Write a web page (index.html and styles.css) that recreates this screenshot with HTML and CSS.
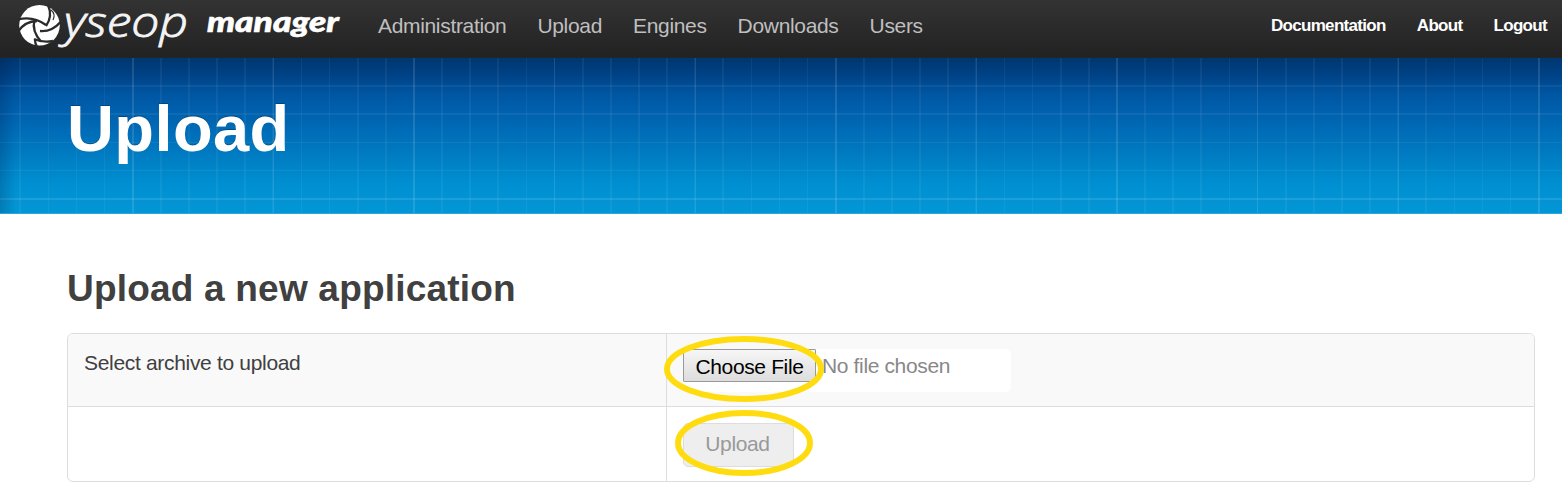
FILE: index.html
```html
<!DOCTYPE html>
<html lang="en">
<head>
<meta charset="utf-8">
<title>Yseop Manager</title>
<link rel="stylesheet" href="styles.css">
</head>
<body>
<header class="topbar">
  <svg class="brand" width="345" height="57" viewBox="0 0 345 57" role="img" aria-label="yseop manager">
    <circle cx="39.5" cy="25.3" r="20.3" fill="#fff"/>
    <g class="brand-blades">
      <path d="M18 19.5 Q33 15.5 46 25"/>
      <path d="M48 5 Q53 16 46 26"/>
      <path d="M60.5 22 Q52 32 40 31"/>
      <path d="M34.500 20 Q31.500 31 41 41.500"/>
      <path d="M18.500 31 Q25 21.500 37 21"/>
      <path d="M34 39 Q43 43 53 41"/>
      <path d="M35 40 Q35 43 37 47"/>
      <path d="M51 10 Q56 14 53 20" class="brand-blade-thin"/>
    </g>
    <text class="brand-name" x="64" y="36.500" textLength="124" lengthAdjust="spacingAndGlyphs">yseop</text>
    <text class="brand-product" x="207" y="32" textLength="132" lengthAdjust="spacingAndGlyphs">manager</text>
  </svg>
  <nav class="main-nav">
    <a>Administration</a><a>Upload</a><a>Engines</a><a>Downloads</a><a>Users</a>
  </nav>
  <nav class="side-nav">
    <a>Documentation</a><a>About</a><a>Logout</a>
  </nav>
</header>
<section class="banner"><h1>Upload</h1></section>
<main class="content">
  <h2>Upload a new application</h2>
  <div class="form-table">
    <div class="row striped">
      <div class="cell label">Select archive to upload</div>
      <div class="cell">
        <div class="file-input"><button class="choose" type="button">Choose File</button><span>No file chosen</span></div>
        <svg class="ring" width="160" height="66"><ellipse cx="80" cy="33" rx="77" ry="30"/></svg>
      </div>
    </div>
    <div class="row">
      <div class="cell label"></div>
      <div class="cell">
        <button class="submit" type="button">Upload</button>
        <svg class="ring ring-small" width="138" height="66"><ellipse cx="69" cy="33" rx="66" ry="30"/></svg>
      </div>
    </div>
  </div>
</main>
</body>
</html>
```
FILE: styles.css
```css
* { box-sizing: border-box; }
body { margin: 0; background: #fff; color: #404040; font-family: "Liberation Sans", Arial, sans-serif; font-size: 21px; }
.topbar { display: flex; height: 58px; background: linear-gradient(#333, #222); border-bottom: 1px solid #252525; }
.brand { flex: none; margin-right: 33px; overflow: visible; }
.brand-blades { fill: none; stroke: #2b2b2b; stroke-width: 2.3; }
.brand-blade-thin { stroke-width: 1.2; }
.brand-name { font: italic 300 43px "Open Sans", sans-serif; fill: #f4f4f4; stroke: #f4f4f4; stroke-width: .9px; }
.brand-product { font: italic 900 29px Lato, sans-serif; fill: #fff; stroke: #fff; stroke-width: .6px; }
.main-nav { display: flex; gap: 31px; line-height: 52px; color: #bfbfbf; letter-spacing: -.33px; }
.side-nav { display: flex; gap: 31px; margin-left: auto; padding-right: 15px; line-height: 51px; color: #fff; font-size: 17px; font-weight: bold; letter-spacing: -.68px; }
.banner {
  height: 156px; padding: 33px 67px 0;
  background:
    linear-gradient(90deg, rgba(0,20,60,.2), transparent 16px),
    repeating-linear-gradient(90deg, transparent 0 139.1px, rgba(255,255,255,.07) 139.1px 140.6px) -7px 0 / 1700px 100%,
    repeating-linear-gradient(90deg, transparent 0 26.4px, rgba(255,255,255,.05) 26.4px 28.12px) -7px 0 / 1700px 100%,
    linear-gradient(transparent 140px, rgba(255,255,255,.05) 140px 142px, transparent 142px),
    repeating-linear-gradient(transparent 0 26.3px, rgba(255,255,255,.06) 26.3px 28.1px) 0 1px / 100% 200px,
    linear-gradient(#003670, #004286 11%, #0057a4 24%, #0068b4 43%, #007bc1 62%, #0090d2 82%, #0396d5);
  border-bottom: 1px solid #29a6dc;
}
h1 { margin: 0; color: #fff; font-size: 65px; line-height: 75px; letter-spacing: .4px; text-shadow: 0 -1px 0 rgba(0,0,0,.25); }
.content { padding: 53px 27px 0 67px; }
h2 { margin: 0 0 23px; font-size: 37px; line-height: 43px; letter-spacing: .2px; }
.form-table { height: 149px; border: 1px solid #ddd; border-radius: 6px; }
.row { display: grid; grid-template-columns: 598px 1fr; height: 72px; }
.row + .row { height: 75px; border-top: 1px solid #ddd; }
.striped { background: #f9f9f9; border-radius: 5px 5px 0 0; }
.cell { position: relative; padding: 16px; padding-top: 15px; border-left: 1px solid #ddd; letter-spacing: -.36px; }
.label { border-left: 0; padding-top: 16px; line-height: 26px; letter-spacing: -.32px; }
.file-input { display: flex; align-items: flex-start; gap: 6px; width: 328px; height: 43px; background: #fff; border-radius: 5px; color: #888; line-height: 34px; }
button { font: inherit; letter-spacing: inherit; }
.choose { width: 133px; height: 33px; padding: 0; color: #000; background: linear-gradient(#f6f6f6, #ddd); border: 1px solid #999; border-radius: 1px; }
.submit { display: block; width: 111px; height: 44px; margin-top: 1px; padding: 0 2px 2px 0; color: #999; background: #eee; border: 1px solid #ddd; border-radius: 5px; }
.ring { position: absolute; left: -3px; top: 2px; fill: none; stroke: #ffdc10; stroke-width: 6; }
.ring-small { left: 8px; top: 3px; }
```
